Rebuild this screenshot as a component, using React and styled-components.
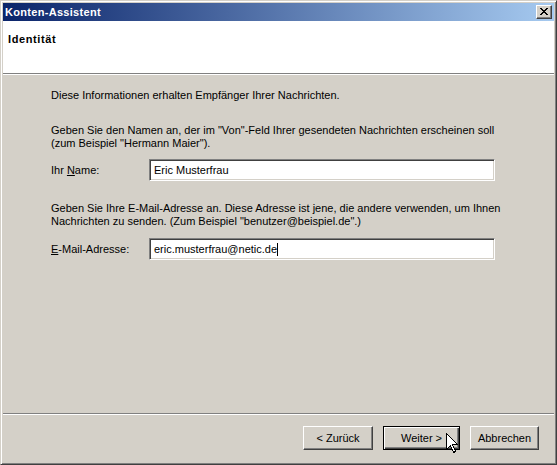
import React from "react";
import styled, { createGlobalStyle } from "styled-components";

const GlobalStyle = createGlobalStyle`
  html, body {
    margin: 0;
    padding: 0;
    background: #d4d0c8;
  }
  * { box-sizing: border-box; }
`;

const FONT = `"Liberation Sans", Arial, sans-serif`;

const Window = styled.div`
  position: relative;
  width: 557px;
  height: 465px;
  display: flex;
  flex-direction: column;
  background: #d4d0c8;
  border: 1px solid;
  border-color: #d4d0c8 #404040 #404040 #d4d0c8;
  box-shadow: inset 1px 1px #ffffff, inset -1px -1px #808080;
  padding: 2px;
  font-family: ${FONT};
  font-size: 11px;
  line-height: 13px;
  color: #000;
`;

const TitleBar = styled.div`
  height: 18px;
  flex: none;
  display: flex;
  align-items: center;
  justify-content: space-between;
  padding: 0 2px;
  background: linear-gradient(to right, #0a246a, #a6caf0);
`;

const TitleText = styled.span`
  color: #fff;
  font-weight: bold;
  font-size: 11px;
  letter-spacing: 0.3px;
`;

const CaptionButton = styled.div`
  width: 16px;
  height: 14px;
  display: flex;
  align-items: center;
  justify-content: center;
  background: #d4d0c8;
  border: 1px solid;
  border-color: #ffffff #404040 #404040 #ffffff;
  box-shadow: inset -1px -1px #808080;
  padding: 0 1px 1px 0;
`;

const Header = styled.div`
  height: 52px;
  flex: none;
  background: #fff;
  padding: 12px 0 0 5px;
  font-weight: bold;
  letter-spacing: 0.6px;
`;

const Etched = styled.div`
  flex: none;
  height: 2px;
  border-top: 1px solid #808080;
  border-bottom: 1px solid #ffffff;
`;

const Body = styled.div`
  flex: 1;
  display: flex;
  flex-direction: column;
  padding: 14px 0 0 48px;
`;

const Para = styled.p`
  margin: 0 0 ${(p) => p.$after}px 0;
  width: 470px;
`;

const FieldRow = styled.div`
  display: flex;
  align-items: center;
  margin-bottom: ${(p) => p.$after}px;
`;

const Label = styled.label`
  width: 98px;
  flex: none;
`;

const Key = styled.span`
  text-decoration: underline;
`;

const TextField = styled.div`
  width: 346px;
  height: 22px;
  display: flex;
  align-items: center;
  padding-left: 4px;
  background: #fff;
  border: 1px solid;
  border-color: #808080 #ffffff #ffffff #808080;
  box-shadow: inset 1px 1px #404040, inset -1px -1px #d4d0c8;
  white-space: nowrap;
`;

const Caret = styled.span`
  display: inline-block;
  width: 1px;
  height: 13px;
  background: #000;
`;

const Footer = styled.div`
  flex: none;
  height: 47px;
  display: flex;
  justify-content: flex-end;
  align-items: flex-start;
  gap: 10px;
  padding: 11px 15px 0 0;
`;

const Button = styled.div`
  width: ${(p) => p.$w}px;
  height: 24px;
  display: flex;
  align-items: center;
  justify-content: center;
  background: #d4d0c8;
  border: 1px solid;
  border-color: ${(p) =>
    p.$default ? "#000" : "#ffffff #404040 #404040 #ffffff"};
  box-shadow: ${(p) =>
    p.$default
      ? "inset 1px 1px #ffffff, inset -1px -1px #404040, inset -2px -2px #808080"
      : "inset -1px -1px #808080"};
`;

const Pointer = styled.svg`
  position: absolute;
  left: 445px;
  top: 432px;
  pointer-events: none;
`;

const closePixels = [
  [0, 0], [1, 0], [6, 0], [7, 0],
  [1, 1], [2, 1], [5, 1], [6, 1],
  [2, 2], [3, 2], [4, 2], [5, 2],
  [3, 3], [4, 3],
  [2, 4], [3, 4], [4, 4], [5, 4],
  [1, 5], [2, 5], [5, 5], [6, 5],
  [0, 6], [1, 6], [6, 6], [7, 6],
];

function CloseGlyph() {
  return (
    <svg width="8" height="7" viewBox="0 0 8 7" shapeRendering="crispEdges">
      {closePixels.map(([x, y]) => (
        <rect key={`${x}-${y}`} x={x} y={y} width="1" height="1" fill="#000" />
      ))}
    </svg>
  );
}

export default function App() {
  return (
    <>
      <GlobalStyle />
      <Window>
        <TitleBar>
          <TitleText>Konten-Assistent</TitleText>
          <CaptionButton>
            <CloseGlyph />
          </CaptionButton>
        </TitleBar>
        <Header>Identität</Header>
        <Etched />
        <Body>
          <Para $after={22}>
            Diese Informationen erhalten Empfänger Ihrer Nachrichten.
          </Para>
          <Para $after={9}>
            Geben Sie den Namen an, der im "Von"-Feld Ihrer gesendeten
            Nachrichten erscheinen soll (zum Beispiel "Hermann Maier").
          </Para>
          <FieldRow $after={21}>
            <Label>
              Ihr <Key>N</Key>ame:
            </Label>
            <TextField>Eric Musterfrau</TextField>
          </FieldRow>
          <Para $after={10}>
            Geben Sie Ihre E-Mail-Adresse an. Diese Adresse ist jene, die
            andere verwenden, um Ihnen Nachrichten zu senden. (Zum Beispiel
            "benutzer@beispiel.de".)
          </Para>
          <FieldRow $after={0}>
            <Label>
              <Key>E</Key>-Mail-Adresse:
            </Label>
            <TextField>
              eric.musterfrau@netic.de
              <Caret />
            </TextField>
          </FieldRow>
        </Body>
        <Etched />
        <Footer>
          <Button $w={70}>&lt; Zurück</Button>
          <Button $w={77} $default>
            Weiter &gt;
          </Button>
          <Button $w={69}>Abbrechen</Button>
        </Footer>
        <Pointer width="12" height="21" viewBox="0 0 12 21" shapeRendering="crispEdges">
          <path
            d="M0.5 0.5 L0.5 16.5 L4.5 12.5 L7.5 19.5 L9.5 18.5 L6.5 11.5 L11.5 11.5 Z"
            fill="#fff"
            stroke="#000"
            strokeWidth="1"
          />
        </Pointer>
      </Window>
    </>
  );
}
